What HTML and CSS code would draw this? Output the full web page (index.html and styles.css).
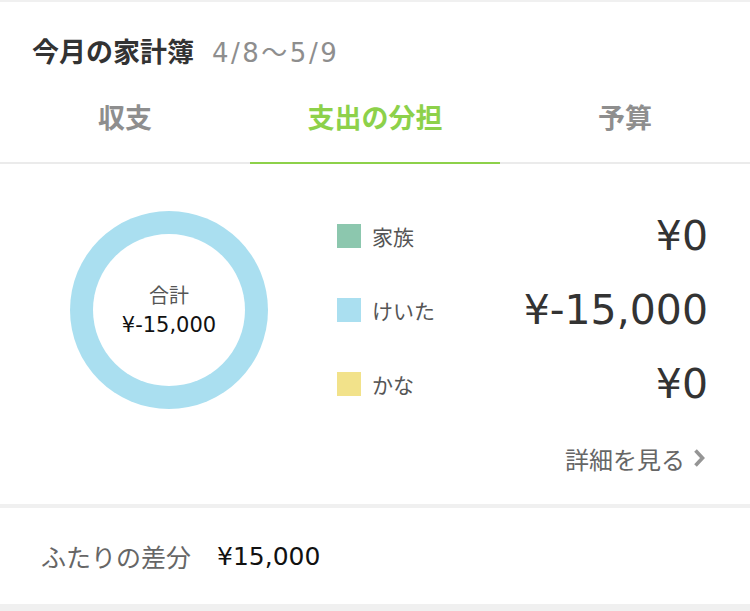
FILE: index.html
```html
<!DOCTYPE html>
<html>
<head>
  <meta charset="utf-8">
  <link rel="stylesheet" href="styles.css">
</head>
<body>
  <div class="card main-card">
    <div class="header">
      <span class="title">今月の家計簿</span>
      <span class="period">4/8〜5/9</span>
    </div>
    <div class="tabs">
      <div class="tab">収支</div>
      <div class="tab active">支出の分担</div>
      <div class="tab">予算</div>
    </div>
    <div class="summary">
      <div class="donut">
        <div class="donut-hole">
          <div class="donut-label">合計</div>
          <div class="donut-value">¥-15,000</div>
        </div>
      </div>
      <div class="legend">
        <div class="legend-row">
          <span class="swatch swatch-family"></span>
          <span class="legend-name">家族</span>
          <span class="legend-amount">¥0</span>
        </div>
        <div class="legend-row">
          <span class="swatch swatch-keita"></span>
          <span class="legend-name">けいた</span>
          <span class="legend-amount">¥-15,000</span>
        </div>
        <div class="legend-row">
          <span class="swatch swatch-kana"></span>
          <span class="legend-name">かな</span>
          <span class="legend-amount">¥0</span>
        </div>
      </div>
    </div>
    <div class="more">
      <span>詳細を見る</span>
      <svg class="chevron" width="15" height="20" viewBox="0 0 15 20">
        <path d="M3.5 2.5 L10.5 10 L3.5 17.5" fill="none" stroke="#959595" stroke-width="3.6"/>
      </svg>
    </div>
  </div>

  <div class="card diff-card">
    <span class="diff-label">ふたりの差分</span>
    <span class="diff-value">¥15,000</span>
  </div>
</body>
</html>
```

FILE: styles.css
```css
:root {
    --green: #8dd14a;
    --text-dark: #333;
    --text-gray: #8e8e8e;
    --font-family: "Noto Sans CJK JP", sans-serif;
    --number-font: "DejaVu Sans", "Noto Sans CJK JP", sans-serif;
}

body {
    margin: 0;
    padding: 2px 0 6px;
    background: #f0f0f0;
    font-family: var(--font-family);
    color: var(--text-dark);
}

.card {
    background: white;
}

.main-card {
    margin-bottom: 4px;
}

/* header */
.header {
    display: flex;
    align-items: center;
    padding: 30px 32px 0;
    height: 36px;
}

.title {
    font-size: 27px;
    font-weight: bold;
    color: #333;
}

.period {
    margin-left: 18px;
    font-family: var(--number-font);
    font-size: 26px;
    letter-spacing: 2.5px;
    color: var(--text-gray);
}

/* tabs */
.tabs {
    display: flex;
    border-bottom: 2px solid #ebebeb;
}

.tab {
    flex: 1;
    text-align: center;
    font-size: 27px;
    font-weight: bold;
    color: var(--text-gray);
    padding-top: 32px;
    line-height: 34px;
    height: 94px;
    box-sizing: border-box;
    margin-bottom: -2px;
}

.tab.active {
    color: var(--green);
    height: 96px;
    border-bottom: 2px solid var(--green);
}

/* summary */
.summary {
    display: flex;
    align-items: center;
    padding: 47px 42px 0 70px;
}

.donut {
    width: 198px;
    height: 198px;
    border-radius: 50%;
    background: #aadff0;
    display: flex;
    align-items: center;
    justify-content: center;
    flex-shrink: 0;
}

.donut-hole {
    width: 152px;
    height: 152px;
    border-radius: 50%;
    background: white;
    display: flex;
    flex-direction: column;
    align-items: center;
    justify-content: center;
}

.donut-label {
    font-size: 20px;
    line-height: 26px;
    color: #555;
}

.donut-value {
    font-family: var(--number-font);
    font-size: 21px;
    line-height: 26px;
    margin-top: 4px;
    color: #111;
}

.legend {
    flex: 1;
    margin-left: 69px;
    display: flex;
    flex-direction: column;
    gap: 27px;
}

.legend-row {
    display: flex;
    align-items: center;
    height: 47px;
}

.swatch {
    width: 24px;
    height: 24px;
    margin-right: 11px;
}

.swatch-family { background: #8cc7ae; }
.swatch-keita { background: #aadff0; }
.swatch-kana { background: #f2e28a; }

.legend-name {
    font-size: 21px;
    color: #555;
}

.legend-amount {
    margin-left: auto;
    font-family: var(--number-font);
    font-size: 41px;
    color: var(--text-dark);
}

/* more link */
.more {
    display: flex;
    justify-content: flex-end;
    align-items: center;
    padding: 35px 43px 32px 0;
    height: 28px;
    font-size: 24px;
    color: #666;
}

.chevron {
    margin-left: 7px;
}

/* diff card */
.diff-card {
    display: flex;
    align-items: center;
    height: 96px;
    padding-left: 41px;
}

.diff-label {
    font-size: 25px;
    color: #666;
}

.diff-value {
    margin-left: 26px;
    font-family: var(--number-font);
    font-size: 25px;
    color: #111;
}
```
